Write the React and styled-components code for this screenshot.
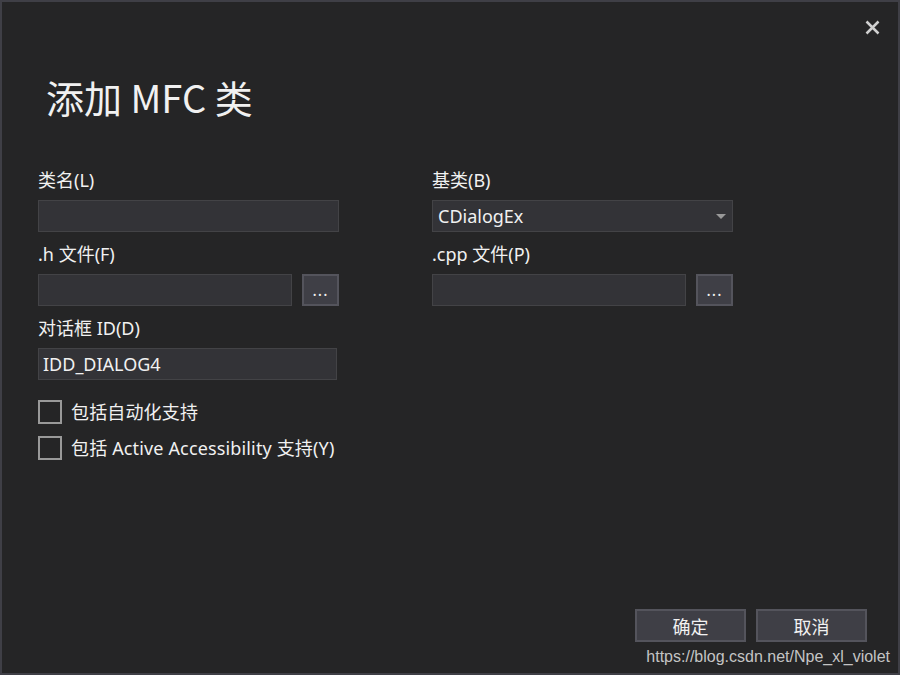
import React, { useState } from 'react'
import styled, { createGlobalStyle } from 'styled-components'

const GlobalStyle = createGlobalStyle`
  html, body {
    margin: 0;
    padding: 0;
    background: #252526;
  }
  * {
    box-sizing: border-box;
  }
`

const Dialog = styled.div`
  position: relative;
  width: 900px;
  height: 675px;
  display: flex;
  flex-direction: column;
  background: #252526;
  border: 2px solid #3f3f46;
  padding: 0 31px 31px 36px;
  font-family: 'Segoe UI', 'Noto Sans', 'Noto Sans CJK SC', sans-serif;
  color: #f1f1f1;
  overflow: hidden;
`

const TopBar = styled.div`
  display: flex;
  justify-content: flex-end;
  height: 58px;
  padding-top: 13px;
  margin-right: -17px;
`

const CloseButton = styled.button`
  width: 24px;
  height: 24px;
  padding: 0;
  border: 0;
  background: transparent;
  display: flex;
  align-items: center;
  justify-content: center;
  cursor: pointer;
`

const Title = styled.h1`
  margin: 12px 0 46px 8px;
  font-family: 'Microsoft YaHei UI', 'Noto Sans CJK SC', sans-serif;
  font-size: 38px;
  line-height: 50px;
  font-weight: 400;
  color: #f1f1f1;
`

const Form = styled.div`
  display: grid;
  grid-template-columns: 301px 301px;
  column-gap: 93px;
  row-gap: 10px;
`

const Field = styled.div`
  display: flex;
  flex-direction: column;
`

const Label = styled.label`
  font-size: 18px;
  line-height: 24px;
  margin-bottom: 8px;
  color: #f1f1f1;
`

const Row = styled.div`
  display: flex;
  gap: 10px;
`

const TextInput = styled.input`
  width: ${(p) => p.$width || '100%'};
  flex: ${(p) => (p.$grow ? 1 : 'none')};
  min-width: 0;
  height: 32px;
  padding: 0 4px;
  background: #333337;
  border: 1px solid #434346;
  outline: none;
  color: #f1f1f1;
  font-family: inherit;
  font-size: 18px;
`

const BrowseButton = styled.button`
  width: 37px;
  height: 32px;
  padding: 0 0 3px;
  background: #3f3f46;
  border: 2px solid #54545c;
  color: #f1f1f1;
  font-family: inherit;
  font-size: 16px;
  letter-spacing: 1px;
  display: flex;
  align-items: flex-end;
  justify-content: center;
  cursor: pointer;
`

const Combo = styled.div`
  height: 32px;
  display: flex;
  align-items: center;
  justify-content: space-between;
  padding: 0 6px 0 5px;
  background: #333337;
  border: 1px solid #434346;
  font-size: 18px;
`

const Arrow = styled.span`
  width: 0;
  height: 0;
  border-left: 5px solid transparent;
  border-right: 5px solid transparent;
  border-top: 5px solid #999999;
`

const Checks = styled.div`
  display: flex;
  flex-direction: column;
  gap: 12px;
  margin-top: 20px;
`

const CheckRow = styled.label`
  display: flex;
  align-items: center;
  gap: 9px;
  font-size: 18px;
  line-height: 24px;
  letter-spacing: 0.15px;
  cursor: pointer;
`

const Box = styled.span`
  width: 24px;
  height: 24px;
  border: 2px solid #999999;
  background: ${(p) => (p.$on ? '#3f3f46' : 'transparent')};
  display: flex;
  align-items: center;
  justify-content: center;
`

const Spacer = styled.div`
  flex: 1;
`

const Footer = styled.div`
  display: flex;
  justify-content: flex-end;
  gap: 10px;
`

const DialogButton = styled.button`
  width: 111px;
  height: 33px;
  background: #3f3f46;
  border: 2px solid #54545c;
  color: #f1f1f1;
  font-family: inherit;
  font-size: 18px;
  cursor: pointer;
`

const Watermark = styled.div`
  position: absolute;
  right: 8px;
  bottom: 7px;
  font-family: 'Liberation Sans', Arial, sans-serif;
  font-size: 16px;
  color: #c4c4c4;
`

const Check = ({ label }) => {
  const [on, setOn] = useState(false)
  return (
    <CheckRow onClick={() => setOn(!on)}>
      <Box $on={on}>
        {on && (
          <svg width="14" height="14" viewBox="0 0 14 14">
            <path d="M2 7l3.5 3.5L12 3" stroke="#f1f1f1" strokeWidth="2" fill="none" />
          </svg>
        )}
      </Box>
      <span>{label}</span>
    </CheckRow>
  )
}

const App = () => {
  return (
    <>
      <GlobalStyle />
      <Dialog>
        <TopBar>
          <CloseButton>
            <svg width="15" height="15" viewBox="0 0 15 15">
              <path d="M1.5 1.5L13.5 13.5M13.5 1.5L1.5 13.5" stroke="#d0d0d0" strokeWidth="2.5" />
            </svg>
          </CloseButton>
        </TopBar>
        <Title>添加 MFC 类</Title>
        <Form>
          <Field>
            <Label>类名(L)</Label>
            <TextInput type="text" />
          </Field>
          <Field>
            <Label>基类(B)</Label>
            <Combo>
              <span>CDialogEx</span>
              <Arrow />
            </Combo>
          </Field>
          <Field>
            <Label>.h 文件(F)</Label>
            <Row>
              <TextInput type="text" $grow />
              <BrowseButton>...</BrowseButton>
            </Row>
          </Field>
          <Field>
            <Label>.cpp 文件(P)</Label>
            <Row>
              <TextInput type="text" $grow />
              <BrowseButton>...</BrowseButton>
            </Row>
          </Field>
          <Field>
            <Label>对话框 ID(D)</Label>
            <TextInput type="text" defaultValue="IDD_DIALOG4" $width="299px" />
          </Field>
        </Form>
        <Checks>
          <Check label="包括自动化支持" />
          <Check label="包括 Active Accessibility 支持(Y)" />
        </Checks>
        <Spacer />
        <Footer>
          <DialogButton>确定</DialogButton>
          <DialogButton>取消</DialogButton>
        </Footer>
        <Watermark>https://blog.csdn.net/Npe_xl_violet</Watermark>
      </Dialog>
    </>
  )
}

export default App
